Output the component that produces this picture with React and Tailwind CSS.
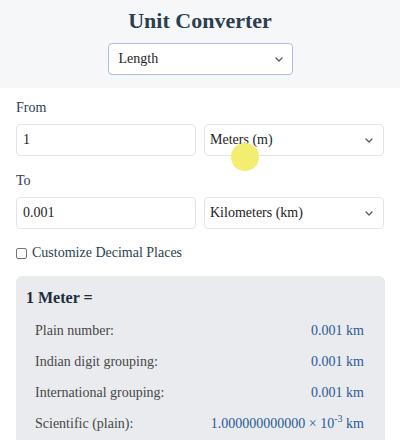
import React from "react";

function Chevron() {
  return (
    <svg width="8" height="5" viewBox="0 0 8 5" fill="none" className="shrink-0">
      <path d="M1 1l3 3 3-3" stroke="#555" strokeWidth="1.2" strokeLinecap="round" strokeLinejoin="round" />
    </svg>
  );
}

function Row({ label, children }) {
  return (
    <div className="h-[31px] flex items-center justify-between pl-[19px] pr-[21px]">
      <span className="text-[#474747]">{label}</span>
      <span className="text-[#2b5a96]">{children}</span>
    </div>
  );
}

export default function App() {
  return (
    <div
      className="relative w-[400px] h-[440px] overflow-hidden bg-white text-[14px] leading-[20px] text-[#222]"
      style={{ fontFamily: '"Liberation Serif", "DejaVu Serif", serif' }}
    >
      <header className="h-[88px] bg-[#f6f7f9] flex flex-col items-center pt-[8px]">
        <h1 className="text-[22px] leading-[26px] font-bold text-[#2c3e50]">Unit Converter</h1>
        <div className="mt-[9px] w-[185px] h-[32px] bg-white border border-[#a9c1dc] rounded-[4px] flex items-center justify-between pl-[10px] pr-[9px]">
          <span className="text-[#1e1e1e]">Length</span>
          <Chevron />
        </div>
      </header>

      <main className="px-4 pt-[10px]">
        <div className="h-[20px] text-[#2c3e50]">From</div>
        <div className="mt-[6px] grid grid-cols-2 gap-2">
          <div className="h-[32px] border border-[#e3e5e8] rounded-[4px] flex items-center pl-[6px]">1</div>
          <div className="h-[32px] border border-[#e3e5e8] rounded-[4px] flex items-center justify-between pl-[5px] pr-[10px]">
            <span>Meters (m)</span>
            <Chevron />
          </div>
        </div>

        <div className="mt-[15px] h-[20px] text-[#2c3e50]">To</div>
        <div className="mt-[6px] grid grid-cols-2 gap-2">
          <div className="h-[32px] border border-[#e3e5e8] rounded-[4px] flex items-center pl-[6px]">0.001</div>
          <div className="h-[32px] border border-[#e3e5e8] rounded-[4px] flex items-center justify-between pl-[5px] pr-[10px]">
            <span>Kilometers (km)</span>
            <Chevron />
          </div>
        </div>

        <div className="mt-[14px] h-[20px] flex items-center gap-[5px] text-[#2c3e50]">
          <span className="w-[11px] h-[11px] border border-[#767676] rounded-[2px] bg-white shrink-0" />
          <span>Customize Decimal Places</span>
        </div>

        <section className="mt-[13px] w-[369px] bg-[#e9ebef] rounded-[6px] pt-[11px] pb-[10px]">
          <div className="pl-[10px] h-[22px] leading-[22px] text-[16px] font-bold text-[#1f2d3d]">1 Meter =</div>
          <div className="mt-[6px]">
            <Row label="Plain number:">0.001 km</Row>
            <Row label="Indian digit grouping:">0.001 km</Row>
            <Row label="International grouping:">0.001 km</Row>
            <Row label="Scientific (plain):">
              1.000000000000 × 10<sup className="text-[10px] relative top-[-6px] align-baseline">-3</sup> km
            </Row>
          </div>
        </section>
      </main>

      <div className="absolute left-[231px] top-[143px] w-[28px] h-[28px] rounded-full bg-[#f3ee72]" />
    </div>
  );
}
